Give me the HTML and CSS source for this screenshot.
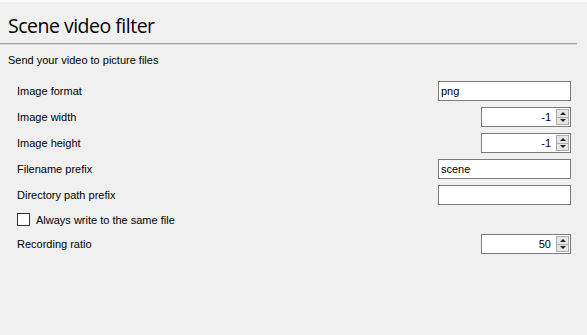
FILE: index.html
```
<!DOCTYPE html>
<html lang="en">
<head>
    <meta charset="UTF-8">
    <title>Scene video filter</title>
    <link rel="stylesheet" href="styles.css">
</head>
<body>
    <div class="panel">
        <h1 class="title">Scene video filter</h1>
        <div class="sep"></div>
        <p class="desc">Send your video to picture files</p>

        <div class="form">
            <div class="row">
                <span class="lbl">Image format</span>
                <div class="field">png</div>
            </div>
            <div class="row">
                <span class="lbl">Image width</span>
                <div class="spin">
                    <span class="val">-1</span>
                    <div class="arrows"><span class="up"></span><span class="down"></span></div>
                </div>
            </div>
            <div class="row">
                <span class="lbl">Image height</span>
                <div class="spin">
                    <span class="val">-1</span>
                    <div class="arrows"><span class="up"></span><span class="down"></span></div>
                </div>
            </div>
            <div class="row">
                <span class="lbl">Filename prefix</span>
                <div class="field">scene</div>
            </div>
            <div class="row">
                <span class="lbl">Directory path prefix</span>
                <div class="field"></div>
            </div>
            <div class="row check">
                <span class="box"></span>
                <span class="lbl">Always write to the same file</span>
            </div>
            <div class="row">
                <span class="lbl">Recording ratio</span>
                <div class="spin">
                    <span class="val">50</span>
                    <div class="arrows"><span class="up"></span><span class="down"></span></div>
                </div>
            </div>
        </div>
    </div>
</body>
</html>
```

FILE: styles.css
```
*{
    margin: 0;
    padding: 0;
    box-sizing: border-box;
}
body {
    background-color: #f0f0f0;
    font-family: "Liberation Sans", Arial, sans-serif;
    font-size: 11px;
    color: #000;
}
.panel {
    border-top: 2px solid #fafafa;
    height: 335px;
}
.title {
    font-family: "Open Sans", sans-serif;
    font-weight: normal;
    font-size: 19.5px;
    letter-spacing: -0.5px;
    line-height: 27px;
    padding: 10px 8px 0;
}
.sep {
    margin-top: 4px;
    margin-right: 10px;
    border-top: 1px solid #a0a0a0;
    border-bottom: 1px solid #d8d8d8;
}
.desc {
    line-height: 13px;
    margin-top: 9px;
    padding-left: 8px;
}
.form {
    margin-top: 14px;
    padding: 0 16px 0 17px;
    display: flex;
    flex-direction: column;
    gap: 6px;
}
.row {
    height: 20px;
    display: flex;
    align-items: center;
    justify-content: space-between;
}
.row.check {
    height: 17px;
    justify-content: flex-start;
}
.box {
    width: 13px;
    height: 13px;
    background-color: #fff;
    border: 1px solid #333;
    margin-right: 6px;
}
.field {
    width: 133px;
    height: 20px;
    background-color: #fff;
    border: 1px solid #7a7a7a;
    padding-left: 2px;
    line-height: 18px;
}
.spin {
    width: 90px;
    height: 20px;
    background-color: #fff;
    border: 1px solid #7a7a7a;
    display: flex;
    align-items: center;
    justify-content: flex-end;
}
.val {
    padding-right: 5px;
}
.arrows {
    width: 13px;
    height: 16px;
    margin-right: 1px;
    border: 1px solid #adadad;
    background-color: #e5e5e5;
    display: flex;
    flex-direction: column;
}
.arrows span {
    flex: 1;
    display: flex;
    align-items: center;
    justify-content: center;
}
.arrows .up {
    border-bottom: 1px solid #adadad;
}
.arrows .up::after {
    content: "";
    border-left: 3px solid transparent;
    border-right: 3px solid transparent;
    border-bottom: 3px solid #222;
}
.arrows .down::after {
    content: "";
    border-left: 3px solid transparent;
    border-right: 3px solid transparent;
    border-top: 3px solid #222;
}
```
